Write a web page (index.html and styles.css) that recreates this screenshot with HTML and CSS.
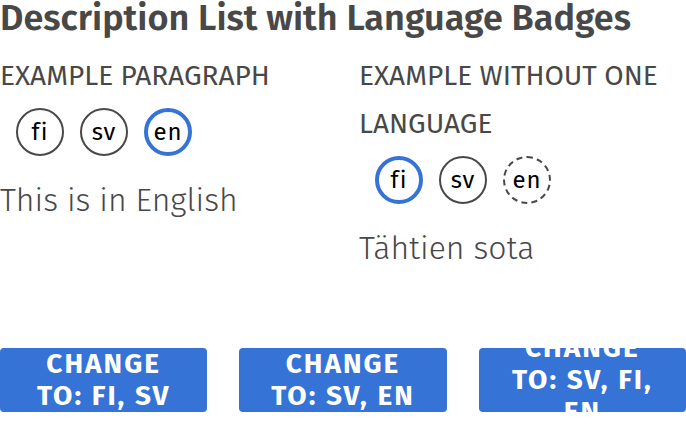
FILE: index.html
```
<!DOCTYPE html>
<html lang="en">
<head>
<meta charset="utf-8">
<meta name="viewport" content="width=device-width, initial-scale=1">
<title>Description List</title>
<link rel="stylesheet" href="styles.css">
</head>
<body>
<main>
<h1 class="title">Description List with Language Badges</h1>
<dl class="list">
<div class="item">
<dt class="term">Example paragraph</dt>
<dd class="badges"><button class="badge" type="button">fi</button><button class="badge" type="button">sv</button><button class="badge badge-active" type="button">en</button></dd>
<dd class="value">This is in English</dd>
</div>
<div class="item">
<dt class="term">Example without one language</dt>
<dd class="badges"><button class="badge badge-active" type="button">fi</button><button class="badge" type="button">sv</button><button class="badge badge-missing" type="button">en</button></dd>
<dd class="value" lang="fi">Tähtien sota</dd>
</div>
</dl>
<div class="actions">
<button class="action" type="button"><span>Change to: fi, sv</span></button>
<button class="action" type="button"><span>Change to: sv, en</span></button>
<button class="action" type="button"><span>Change to: sv, fi, en</span></button>
</div>
</main>
</body>
</html>
```

FILE: styles.css
```
* { box-sizing: border-box; }
body { margin: 0; color: #484848; background: #fff; font-family: "Fira Sans", "Noto Sans", sans-serif; }
.title { margin: 0; font-size: 36px; line-height: 36px; font-weight: 600; }
.list { display: grid; grid-template-columns: 1fr 1fr; column-gap: 32px; margin: 16px 0 76px; }
.term { font-size: 28px; line-height: 48px; text-transform: uppercase; }
.badges { display: flex; gap: 16px; margin: 8px 0 0 16px; }
.badge { width: 48px; height: 48px; padding: 0; border: 2px solid #484848; border-radius: 50%; background: #fff; color: #000; font: 400 24px/40px "Fira Sans", "Noto Sans", sans-serif; letter-spacing: 1px; }
.badge-active { border: 4px solid #3573d6; }
.badge-missing { border-style: dashed; }
.value { margin: 20px 0 0; font-size: 32px; line-height: 48px; font-weight: 300; }
.actions { display: grid; grid-template-columns: repeat(3, 1fr); gap: 32px; }
.action { display: flex; align-items: center; justify-content: center; height: 64px; padding: 0 24px; overflow: hidden; border: 0; border-radius: 4px; background: #3573d6; color: #fff; font: 700 28px/32px "Fira Sans", "Noto Sans", sans-serif; letter-spacing: 2px; text-transform: uppercase; }
```
